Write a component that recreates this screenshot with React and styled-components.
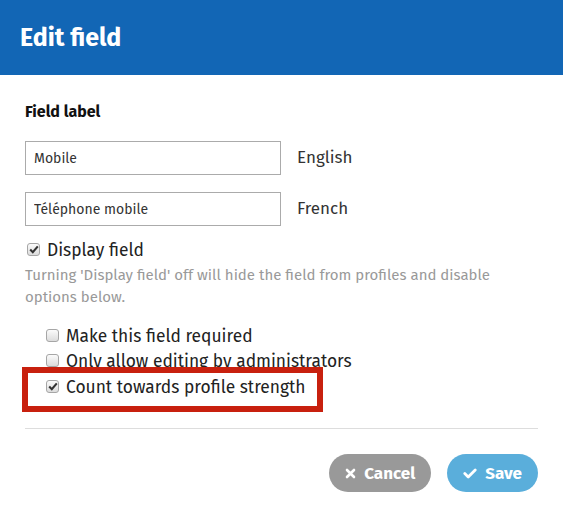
import React from "react";
import styled, { createGlobalStyle } from "styled-components";

const GlobalStyle = createGlobalStyle`
  html, body {
    margin: 0;
    padding: 0;
    background: #fff;
  }
  body {
    font-family: "Fira Sans", Lato, "Open Sans", sans-serif;
    color: #222;
  }
`;

const Modal = styled.div`
  width: 563px;
  height: 518px;
  background: #fff;
`;

const Header = styled.div`
  height: 75px;
  background: #1266b5;
  display: flex;
  align-items: center;
  padding: 0 20px;
  box-sizing: border-box;

  h1 {
    margin: 0;
    color: #fff;
    font-size: 25px;
    font-weight: 700;
  }
`;

const Body = styled.div`
  padding: 27px 25px 0;
`;

const SectionTitle = styled.div`
  font-size: 16px;
  font-weight: 700;
  color: #111;
  margin-bottom: 20px;
`;

const LangList = styled.div`
  display: flex;
  flex-direction: column;
  gap: 17px;
  margin-bottom: 12px;
`;

const LangRow = styled.div`
  display: flex;
  align-items: center;
  gap: 16px;
`;

const TextInput = styled.input`
  width: 256px;
  height: 34px;
  box-sizing: border-box;
  border: 1px solid #ababab;
  padding: 0 8px;
  font-family: inherit;
  font-size: 14px;
  color: #333;
  outline: none;
`;

const LangName = styled.span`
  font-size: 17px;
  color: #333;
  margin-top: -2px;
`;

const CheckRow = styled.label`
  display: flex;
  align-items: center;
  gap: 7px;
  font-size: 17.4px;
  color: #222;
  height: ${(p) => p.$h || 25}px;
  padding-left: ${(p) => (p.$nested ? 21 : 2)}px;
`;

const Box = styled.span`
  width: 13px;
  height: 13px;
  box-sizing: border-box;
  border: 1px solid #a6a6a6;
  border-radius: 3px;
  background: linear-gradient(#fbfbfb, #dcdcdc);
  display: inline-flex;
  align-items: center;
  justify-content: center;
  flex-shrink: 0;
  margin-top: -2px;
`;

const Help = styled.p`
  margin: 1px 0 0;
  font-size: 15px;
  line-height: 22px;
  color: #999;
  padding-right: 20px;
`;

const Options = styled.div`
  margin-top: 16px;
  position: relative;
`;

const Highlight = styled.div`
  position: absolute;
  left: -3px;
  top: 43px;
  width: 301px;
  height: 45px;
  box-sizing: border-box;
  border: 6px solid #c8200e;
  pointer-events: none;
`;

const Divider = styled.hr`
  border: none;
  border-top: 1px solid #ddd;
  margin: 27px 0 0;
`;

const Footer = styled.div`
  display: flex;
  justify-content: flex-end;
  gap: 16px;
  padding: 25px 0 0;
`;

const Button = styled.button`
  height: 38px;
  border: none;
  border-radius: 19px;
  padding: 0 16px;
  background: ${(p) => (p.$primary ? "#5aaedb" : "#999")};
  color: #fff;
  font-family: inherit;
  font-size: 17px;
  font-weight: 700;
  display: inline-flex;
  align-items: center;
  gap: 8px;
  cursor: pointer;
`;

function Check({ checked }) {
  return (
    <Box>
      {checked && (
        <svg width="10" height="9" viewBox="0 0 10 9">
          <path d="M1.2 4.6 L3.8 7.2 L8.8 1.4" fill="none" stroke="#333" strokeWidth="2.1" />
        </svg>
      )}
    </Box>
  );
}

export default function App() {
  return (
    <Modal>
      <GlobalStyle />
      <Header>
        <h1>Edit field</h1>
      </Header>
      <Body>
        <SectionTitle>Field label</SectionTitle>
        <LangList>
          <LangRow>
            <TextInput defaultValue="Mobile" />
            <LangName>English</LangName>
          </LangRow>
          <LangRow>
            <TextInput defaultValue="Téléphone mobile" />
            <LangName>French</LangName>
          </LangRow>
        </LangList>
        <CheckRow>
          <Check checked />
          Display field
        </CheckRow>
        <Help>
          Turning 'Display field' off will hide the field from profiles and disable options below.
        </Help>
        <Options>
          <CheckRow $nested>
            <Check />
            Make this field required
          </CheckRow>
          <CheckRow $nested>
            <Check />
            Only allow editing by administrators
          </CheckRow>
          <CheckRow $nested $h={27}>
            <Check checked />
            Count towards profile strength
          </CheckRow>
          <Highlight />
        </Options>
        <Divider />
        <Footer>
          <Button>
            <svg width="11" height="11" viewBox="0 0 11 11">
              <path d="M2 2 L9 9 M9 2 L2 9" stroke="#fff" strokeWidth="2.6" strokeLinecap="round" />
            </svg>
            Cancel
          </Button>
          <Button $primary>
            <svg width="14" height="11" viewBox="0 0 14 11">
              <path d="M1.8 5.6 L5.2 9 L12.2 2" fill="none" stroke="#fff" strokeWidth="2.8" strokeLinecap="round" strokeLinejoin="round" />
            </svg>
            Save
          </Button>
        </Footer>
      </Body>
    </Modal>
  );
}
